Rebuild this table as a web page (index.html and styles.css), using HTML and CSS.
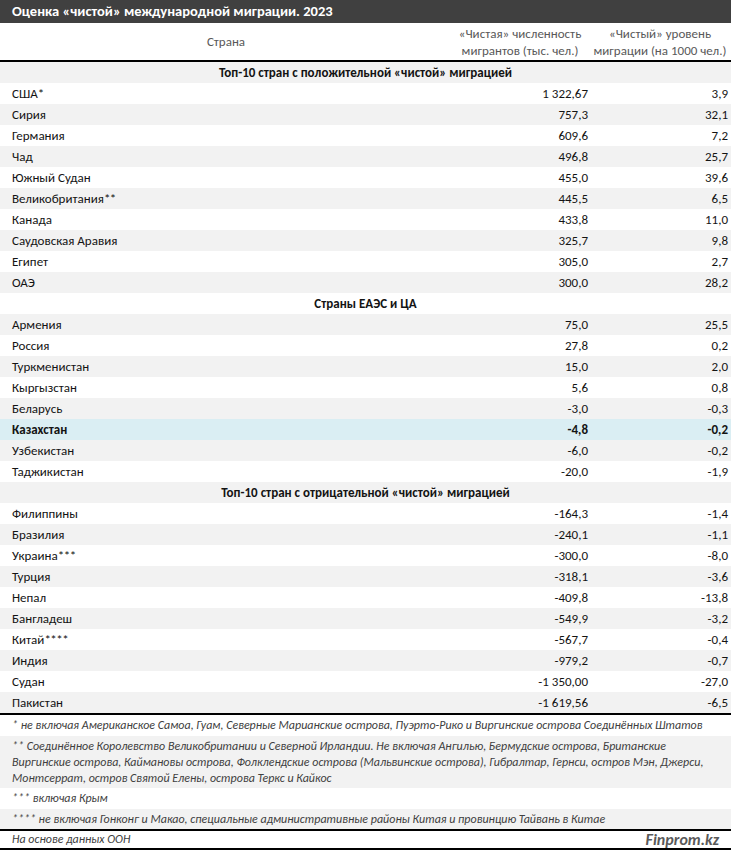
FILE: index.html
```html
<!DOCTYPE html>
<html lang="ru">
<head>
<meta charset="utf-8">
<link rel="stylesheet" href="styles.css">
</head>
<body>
<div class="page">
  <div class="title">Оценка «чистой» международной миграции. 2023</div>
  <table class="tbl">
    <colgroup><col class="c1"><col class="c2"><col class="c3"></colgroup>
    <thead>
      <tr class="head">
        <th class="h-country">Страна</th>
        <th>«Чистая» численность<br>мигрантов (тыс. чел.)</th>
        <th>«Чистый» уровень<br>миграции (на 1000 чел.)</th>
      </tr>
    </thead>
    <tbody>
      <tr class="grp g"><td colspan="3">Топ-10 стран с положительной «чистой» миграцией</td></tr>
      <tr><td>США<span class="ast">*</span></td><td>1 322,67</td><td>3,9</td></tr>
      <tr class="g"><td>Сирия</td><td>757,3</td><td>32,1</td></tr>
      <tr><td>Германия</td><td>609,6</td><td>7,2</td></tr>
      <tr class="g"><td>Чад</td><td>496,8</td><td>25,7</td></tr>
      <tr><td>Южный Судан</td><td>455,0</td><td>39,6</td></tr>
      <tr class="g"><td>Великобритания<span class="ast">**</span></td><td>445,5</td><td>6,5</td></tr>
      <tr><td>Канада</td><td>433,8</td><td>11,0</td></tr>
      <tr class="g"><td>Саудовская Аравия</td><td>325,7</td><td>9,8</td></tr>
      <tr><td>Египет</td><td>305,0</td><td>2,7</td></tr>
      <tr class="g"><td>ОАЭ</td><td>300,0</td><td>28,2</td></tr>
      <tr class="grp"><td colspan="3">Страны ЕАЭС и ЦА</td></tr>
      <tr class="g"><td>Армения</td><td>75,0</td><td>25,5</td></tr>
      <tr><td>Россия</td><td>27,8</td><td>0,2</td></tr>
      <tr class="g"><td>Туркменистан</td><td>15,0</td><td>2,0</td></tr>
      <tr><td>Кыргызстан</td><td>5,6</td><td>0,8</td></tr>
      <tr class="g"><td>Беларусь</td><td>-3,0</td><td>-0,3</td></tr>
      <tr class="hl"><td>Казахстан</td><td>-4,8</td><td>-0,2</td></tr>
      <tr class="g"><td>Узбекистан</td><td>-6,0</td><td>-0,2</td></tr>
      <tr><td>Таджикистан</td><td>-20,0</td><td>-1,9</td></tr>
      <tr class="grp g"><td colspan="3">Топ-10 стран с отрицательной «чистой» миграцией</td></tr>
      <tr><td>Филиппины</td><td>-164,3</td><td>-1,4</td></tr>
      <tr class="g"><td>Бразилия</td><td>-240,1</td><td>-1,1</td></tr>
      <tr><td>Украина<span class="ast">***</span></td><td>-300,0</td><td>-8,0</td></tr>
      <tr class="g"><td>Турция</td><td>-318,1</td><td>-3,6</td></tr>
      <tr><td>Непал</td><td>-409,8</td><td>-13,8</td></tr>
      <tr class="g"><td>Бангладеш</td><td>-549,9</td><td>-3,2</td></tr>
      <tr><td>Китай<span class="ast">****</span></td><td>-567,7</td><td>-0,4</td></tr>
      <tr class="g"><td>Индия</td><td>-979,2</td><td>-0,7</td></tr>
      <tr><td>Судан</td><td>-1 350,00</td><td>-27,0</td></tr>
      <tr class="g"><td>Пакистан</td><td>-1 619,56</td><td>-6,5</td></tr>
    </tbody>
  </table>
  <div class="notes">
    <p class="note">* не включая Американское Самоа, Гуам, Северные Марианские острова, Пуэрто-Рико и Виргинские острова Соединённых Штатов</p>
    <p class="note g">** Соединённое Королевство Великобритании и Северной Ирландии. Не включая Ангилью, Бермудские острова, Британские Виргинские острова, Каймановы острова, Фолклендские острова (Мальвинские острова), Гибралтар, Гернси, остров Мэн, Джерси, Монтсеррат, остров Святой Елены, острова Теркс и Кайкос</p>
    <p class="note">*** включая Крым</p>
    <p class="note g">**** не включая Гонконг и Макао, специальные административные районы Китая и провинцию Тайвань в Китае</p>
  </div>
  <div class="source">
    <span class="src-text">На основе данных ООН</span>
    <span class="brand">Finprom.kz</span>
  </div>
</div>
</body>
</html>
```

FILE: styles.css
```css
html, body {
  margin: 0;
  padding: 0;
  background: #fff;
}
.page {
  width: 731px;
  font-family: Carlito, Calibri, "Liberation Sans", sans-serif;
  font-size: 13px;
  color: #141414;
}
.title {
  background: #404040;
  color: #fff;
  font-weight: bold;
  font-size: 14.5px;
  height: 23px;
  line-height: 23px;
  padding-left: 12px;
  box-sizing: border-box;
}
.tbl {
  width: 731px;
  border-collapse: collapse;
  table-layout: fixed;
}
.c1 { width: 452px; }
.c2 { width: 140px; }
.c3 { width: 139px; }
.head th {
  font-weight: normal;
  color: #595959;
  height: 38px;
  line-height: 17px;
  padding: 0 4px 0 0;
  text-align: center;
  vertical-align: middle;
  border-bottom: 2px solid #000;
  box-sizing: border-box;
}
.head th:last-child { padding-right: 3px; }
.head th.h-country {
  padding: 0;
}
.tbl tbody td {
  height: 21px;
  padding: 0 4px 0 0;
  text-align: right;
  vertical-align: middle;
  line-height: 21px;
  white-space: nowrap;
}
.tbl tbody td:first-child {
  text-align: left;
  padding: 0 0 0 12px;
}
.tbl tbody td:last-child {
  padding-right: 3px;
}
.ast { letter-spacing: -0.5px; }
.tbl tr.g { background: #f2f2f2; }
.tbl tr.hl { background: #daeef3; font-weight: bold; }
.tbl tr.grp td {
  text-align: center;
  font-weight: bold;
  padding: 0;
}
.tbl tr.grp td:first-child { text-align: center; padding: 0; }
.notes {
  border-top: 2px solid #000;
}
.note {
  margin: 0;
  padding: 2px 12px 2.5px 12px;
  font-style: italic;
  color: #404040;
  font-size: 12px;
  line-height: 16px;
}
.note.g { background: #f2f2f2; }
.source {
  display: flex;
  justify-content: space-between;
  align-items: center;
  border-top: 2px solid #000;
  border-bottom: 2px solid #000;
  height: 17px;
  line-height: 17px;
  padding: 0 12px;
  font-style: italic;
  color: #404040;
  font-size: 12px;
}
.brand {
  font-weight: bold;
  font-size: 16px;
  line-height: 17px;
  color: #595959;
}
```
